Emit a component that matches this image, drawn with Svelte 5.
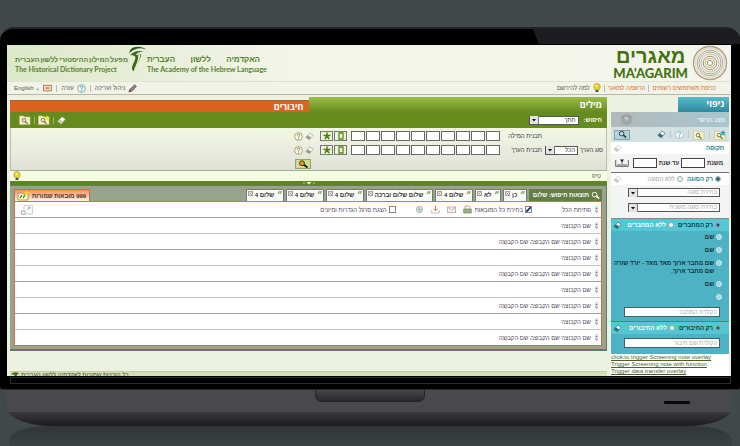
<script>
  const groups = [
    'שם הקבוצה',
    'שם הקבוצה שם הקבוצה שם הקבוצה',
    'שם הקבוצה',
    'שם הקבוצה שם הקבוצה שם הקבוצה',
    'שם הקבוצה',
    'שם הקבוצה שם הקבוצה שם הקבוצה',
    'שם הקבוצה',
    'שם הקבוצה שם הקבוצה שם הקבוצה'
  ];
  const tabs = ['כן', 'לא', 'שלום 4', 'שלום שלום וברכה', 'שלום 4', 'שלום 4', 'שלום 4'];
  const patterns = ['תבנית המילה', 'תבנית הערך'];
  const letters = Array.from({ length: 10 }, (_, i) => i + 1);
  const authors = ['שם', 'שם', 'שם מחבר ארוך מאד מאד - יורד שורה שם מחבר ארוך.', 'שם', ''];
  const links = [
    'click to trigger Screening note overlay',
    'Trigger Screening note with function',
    'Trigger data transfer overlay'
  ];
</script>

{#snippet eraser(color)}
  <svg class="ic" viewBox="0 0 10 10" aria-hidden="true">
    <path d="M1 6 5.5 1.2 9 3.6 4.8 8.6Z" fill="#fff" stroke={color} stroke-width=".8" />
    <path d="M1 6 3.2 3.7 6.8 6.2 4.8 8.6Z" fill={color} />
  </svg>
{/snippet}

{#snippet help(ring, mark, fill)}
  <svg class="ic" viewBox="0 0 10 10" aria-hidden="true">
    <circle cx="5" cy="5" r="4.3" fill={fill} stroke={ring} stroke-width=".8" />
    <path d="M3.5 4Q3.5 2.4 5 2.4T6.5 3.8Q6.5 4.6 5 5.3V6.3" fill="none" stroke={mark} stroke-width="1" />
    <circle cx="5" cy="7.6" r=".6" fill={mark} />
  </svg>
{/snippet}

{#snippet lens(color)}
  <svg class="ic" viewBox="0 0 10 10" aria-hidden="true">
    <circle cx="4" cy="4" r="2.6" fill="none" stroke={color} stroke-width="1.1" />
    <path d="M6 5.8 9 8.6" stroke={color} stroke-width="1.9" />
  </svg>
{/snippet}

{#snippet folder(star)}
  <svg class="folder" viewBox="0 0 12 10" aria-hidden="true">
    <path d="M.5 1h4l1 1h5.500v7.600H.5Z" fill="#f8f3cc" stroke="#cdc07c" stroke-width=".7" />
    <circle cx="5" cy="5.2" r="1.8" fill="none" stroke="#55603a" stroke-width=".8" />
    <path d="M6.2 6.4 8.6 8.800" stroke="#55603a" stroke-width="1.1" />
    {#if star}
      <path d="m9 0 .9 1.900 2 .2-1.500 1.400.5 2.200L9 4.700 7.100 5.700l.4-2.200L6.100 2.100l2-.2Z" fill={star} />
    {/if}
  </svg>
{/snippet}

{#snippet bulb()}
  <svg class="bulb" viewBox="0 0 8 10" aria-hidden="true">
    <circle cx="4" cy="3.800" r="3.200" fill="#f4d522" stroke="#9b8a30" stroke-width=".6" />
    <path d="M2.600 7h2.800v2H2.600Z" fill="#38506e" />
    <circle cx="3.200" cy="3" r="1" fill="#fff7a8" />
  </svg>
{/snippet}

{#snippet arrow()}
  <svg class="arrow" viewBox="0 0 8 8" aria-hidden="true"><path d="M2 3h4L4 5.600Z" fill="#111" /></svg>
{/snippet}

{#snippet chevrons()}
  <svg class="chev" viewBox="0 0 5 8" aria-hidden="true">
    <path d="M1 1h3M1 4.500h3" stroke="#888" stroke-width=".6" />
    <path d="M1 2h3L2.500 3.500ZM1 5.500h3L2.500 7Z" fill="#777" />
  </svg>
{/snippet}

<div class="desk">
  <div class="bezel">
    <div class="glare"></div>
    <div class="screen">
      <header>
        <svg class="rings" viewBox="0 0 36 36" aria-hidden="true">
          <g fill="none">
            <circle cx="18" cy="18" r="16.500" stroke="#b09c80" stroke-width="1.400" />
            <circle cx="18" cy="18" r="14.600" stroke="#e6d9c8" stroke-width="1.600" />
            <circle cx="18" cy="18" r="12.800" stroke="#7ba7a0" stroke-width=".8" />
            <circle cx="18" cy="18" r="11" stroke="#c3a08c" stroke-width="1" />
            <circle cx="18" cy="18" r="9" stroke="#a9c4b5" stroke-width="1" />
            <circle cx="18" cy="18" r="6.800" stroke="#b48c74" stroke-width="1" />
            <circle cx="18" cy="18" r="4.600" stroke="#d9b978" stroke-width="1.200" />
            <circle cx="18" cy="18" r="2.600" stroke="#7d9a8c" stroke-width=".9" />
          </g>
        </svg>
        <h1><span>מאגרים</span><span>MA'AGARIM</span></h1>
        <div class="org">
          <b><span>האקדמיה</span> <span>ללשון</span> <span>העברית</span></b>
          <span dir="ltr">The Academy of the Hebrew Language</span>
        </div>
        <svg class="bird" viewBox="0 0 20 28" aria-hidden="true">
          <path d="M1 8Q2 1 10 1q6 0 9 3-5-2-9-1Q5 4 1 8Z" fill="#2f5214" />
          <path d="M2 10Q7 4 17 6q-7 0-9 4l6-1q-1 6-5 10-2 4-3 8-3-2-1-7 2-3 3-8Q5 9 2 10Z" fill="#3c6a1b" />
          <path d="M11 9l2 1q-1 6-4 9 2-5 2-10Z" fill="#eef2e2" />
        </svg>
        <div class="org">
          <b><span>מפעל</span> <span>המילון</span> <span>ההיסטורי</span> <span>ללשון</span> <span>העברית</span></b>
          <span dir="ltr">The Historical Dictionary Project</span>
        </div>
      </header>

      <nav>
        <a class="hot" href="#login">כניסת משתמשים רשומים</a><i></i>
        <a class="hot" href="#join">הרשמה למאגר</a><i></i>
        {@render bulb()}
        <a href="#why">למה להירשם</a>
        <span class="grow"></span>
        <svg class="ic" viewBox="0 0 10 10" aria-hidden="true">
          <path d="M1 9 2 6 7.500.8 9.400 2.800 4 8Z" fill="#8a8a82" stroke="#3d3d3a" stroke-width=".7" /><path d="m1 9 1-3 2 2Z" fill="#b5442a" />
        </svg>
        <a href="#manage">ניהול ועריכה</a><i class="far"></i>
        {@render help('#6c8c94', '#1fa5c4', '#f2fbfc')}
        <a href="#help">עזרה</a><i class="far"></i>
        <svg class="ic" viewBox="0 0 10 10" aria-hidden="true">
          <path d="M.6 1.500h8.800v6H6L5 8.800 4 7.500H.6Z" fill="#f4dcc0" stroke="#8c6f54" stroke-width=".9" /><path d="M3 3.500h4v2.200H3Z" fill="#e8883c" />
        </svg>
        <a href="#english" dir="ltr">English ⌄</a>
      </nav>

      <div class="cols">
        <aside>
          <h2>ניפוי</h2>
          <div class="state"><span>מצב הניפוי</span>
            <svg viewBox="0 0 14 14" aria-hidden="true"><circle cx="7" cy="7" r="6.500" fill="#a3a8aa" /><path d="M3 4h8L8 8v3L6 10V8Z" fill="#c9cdce" stroke="#83898b" stroke-width=".7" /></svg>
          </div>
          <div class="tools">
            <button aria-label="שמירה">{@render folder('#16a7cb')}</button><i></i>
            <button aria-label="תיקייה">{@render folder('')}</button><i></i>
            <button aria-label="עזרה">{@render help('#9ab3b8', '#2aa5bd', '#fff')}</button><i></i>
            <button aria-label="ניקוי">{@render eraser('#2f6f7c')}</button>
            <span class="grow"></span>
            <button class="find" aria-label="חיפוש">{@render lens('#26404a')}</button>
          </div>
          <section class="period">
            <div class="line"><b class="teal">תקופה</b>{@render eraser('#c9c9c9')}</div>
            <div class="years">
              <label for="from">משנת</label><input id="from" />
              <label for="to">עד שנת</label><input id="to" />
              <span class="grow"></span>
              <svg viewBox="0 0 14 8" aria-hidden="true"><path d="M.7 1v6.300h12.600V1M3 7V5M5 7V5M7 7V2M9 7V5M11 7V5" fill="none" stroke="#555" stroke-width=".9" /><path d="M5 .5h4L7 3Z" fill="#111" /></svg>
            </div>
          </section>
          <section class="kind">
            <div class="line">
              <label class="teal"><input type="radio" name="kind" checked />רק הסוגה</label>
              <label class="dim"><input type="radio" name="kind" />ללא הסוגה</label>
              {@render eraser('#c9c9c9')}
            </div>
            <div class="sel wide"><select aria-label="סוגה"><option>בחירת סוגה</option></select>{@render arrow()}</div>
            <div class="sel wide"><select aria-label="סוגה משנית"><option>בחירת סוגה משנית</option></select>{@render arrow()}</div>
          </section>
          <section class="blue">
            <div class="line">
              <label><input type="radio" name="author" checked />רק המחברים</label>
              <label class="white"><input type="radio" name="author" />ללא המחברים</label>
              {@render eraser('#2b6f7b')}
            </div>
            <div class="authors">
              {#each authors as a}
                <label><input type="radio" name="pick" /><span>{a}</span></label>
              {/each}
            </div>
            <input class="field" aria-label="מחבר" placeholder="הקלדת המחבר" />
          </section>
          <section class="blue last">
            <div class="line">
              <label><input type="radio" name="work" checked />רק החיבורים</label>
              <label class="white"><input type="radio" name="work" />ללא החיבורים</label>
              {@render eraser('#2b6f7b')}
            </div>
            <input class="field" aria-label="חיבור" placeholder="הקלדת שם חיבור" />
          </section>
          <div class="links" dir="ltr">
            {#each links as l}<a href="#overlay">{l}</a>{/each}
          </div>
        </aside>

        <div class="left">
          <main>
            <div class="heads">
              <button class="words">מילים</button>
              <button class="works">חיבורים</button>
            </div>
            <div class="bar">
              <label for="mode">חיפוש:</label>
              <div class="sel mode"><select id="mode"><option>חתך</option></select>{@render arrow()}</div>
              <span class="grow"></span>
              <button aria-label="ניקוי">{@render eraser('#c5cdb5')}</button><i></i>
              <button aria-label="שמירה">{@render folder('#f8e52a')}</button><i></i>
              <button aria-label="תיקייה">{@render folder('')}</button>
            </div>
            <form>
              {#each patterns as p, r}
                <div class="frow">
                  <div class="type">
                    {#if r === 1}
                      <label for="entry">סוג הערך</label>
                      <div class="sel"><select id="entry"><option>הכל</option></select>{@render arrow()}</div>
                    {/if}
                  </div>
                  <span class="plabel">{p}</span>
                  <div class="boxes">
                    {#each letters as n}<input aria-label="{p} {n}" maxlength="1" />{/each}
                  </div>
                  <button type="button" class="key" aria-label="אות">
                    <svg viewBox="0 0 8 8" aria-hidden="true"><path d="M2 1h4v6H2Z" fill="none" stroke="#5a8a1c" stroke-width="1.300" /></svg>
                  </button>
                  <button type="button" class="key" aria-label="כוכבית">
                    <svg viewBox="0 0 8 8" aria-hidden="true"><path d="M4 .5V4M.6 3.200 4 4M7.400 3.200 4 4M1.900 7.200 4 4M6.100 7.200 4 4" stroke="#4c7a12" stroke-width="1.500" /></svg>
                  </button>
                  <button type="button" class="plain" aria-label="ניקוי">{@render eraser('#9b9f8f')}</button>
                  <button type="button" class="plain" aria-label="עזרה">{@render help('#9b7a50', '#7c8a3a', '#fbfcf0')}</button>
                </div>
              {/each}
              <button type="button" class="go" aria-label="חיפוש">
                <svg viewBox="0 0 12 8" aria-hidden="true"><path d="m6 4 4.500 3.500" stroke="#1d1d10" stroke-width="1.900" /><circle cx="5" cy="3.200" r="2.400" fill="#f0a31a" stroke="#3a3412" stroke-width="1" /></svg>
              </button>
            </form>
            <div class="tip"><span>טיפ</span>{@render bulb()}</div>
            <div class="strip"><svg viewBox="0 0 12 4" aria-hidden="true"><path d="M0 2h2M10 2h2" stroke="#b9cf92" /><path d="M3.500 1h5L6 3.600Z" fill="#fff" /></svg></div>
            <div class="results">
              <div class="tabs">
                <strong>{@render lens('#fff')}תוצאות חיפוש: שלום</strong>
                {#each tabs as t}
                  <button class="tab">
                    <em>״</em><span>{t}</span>
                    <svg viewBox="0 0 6 6" aria-hidden="true"><path d="M.5.500h5v5h-5ZM1.700 1.700l2.600 2.600M4.300 1.700 1.700 4.300" fill="none" stroke="#555" stroke-width=".7" /></svg>
                  </button>
                {/each}
                <span class="grow"></span>
                <button class="saved">999 מובאות שמורות
                  <svg viewBox="0 0 13 11" aria-hidden="true"><path d="M1 3h4l1 1h5v6H1Z" fill="#fbf7cf" stroke="#8c7b3a" stroke-width=".7" /><path d="M3 8 5 5M6 8l2-3" stroke="#4c6d1e" stroke-width="1.200" /><path d="m9.500 0 .8 1.900 2 .1-1.500 1.400.5 2-1.800-1.100L7.700 5.400l.5-2L6.700 2l2-.1Z" fill="#f4dd1f" /></svg>
                </button>
              </div>
              <div class="list">
                <div class="row first">
                  {@render chevrons()}<span class="open">פתיחת הכל</span>
                  <label><input type="checkbox" checked />בחירת כל המובאות</label>
                  <div class="acts">
                    <button aria-label="הדפסה"><svg viewBox="0 0 9 9" aria-hidden="true"><path d="M2 4V1h4l1 1v2" fill="#fff" stroke="#8b9a7c" stroke-width=".8" /><path d="M.7 4h7.600v4H.7Z" fill="#9db37e" stroke="#748560" stroke-width=".7" /></svg></button>
                    <button aria-label="דואר"><svg viewBox="0 0 9 9" aria-hidden="true"><path d="M.5 2h8v5.500h-8ZM.5 2l4 3 4-3" fill="#f5f1ee" stroke="#b3a29b" stroke-width=".8" /></svg></button>
                    <button aria-label="הורדה"><svg viewBox="0 0 9 9" aria-hidden="true"><path d="M.7 5v3h7.600V5" fill="none" stroke="#aaa" stroke-width=".8" /><path d="M4.500.500v5M2.500 3.600l2 2.200 2-2.200" fill="none" stroke="#cf7a60" stroke-width="1" /></svg></button>
                    <button aria-label="הגדרות"><svg viewBox="0 0 9 9" aria-hidden="true"><circle cx="4.500" cy="4.500" r="3" fill="#dfe6e8" stroke="#9aa8ad" stroke-width="1" /><circle cx="4.500" cy="4.500" r="1" fill="#84959b" /></svg></button>
                  </div>
                  <label><input type="checkbox" />הצגת סרגל הגדרות ומיונים</label>
                  <span class="grow"></span>
                  <button class="expand" aria-label="הרחבה"><svg viewBox="0 0 12 10" aria-hidden="true"><path d="M3 5V.6h8.400V9H5" fill="none" stroke="#bbb" stroke-width=".8" /><path d="M.6 6h3.600v3.400H.6ZM6 5l3-2.600M7 2.400h2v2" fill="none" stroke="#999" stroke-width=".8" /></svg></button>
                </div>
                {#each groups as g}
                  <div class="row">{@render chevrons()}<span>{g}</span></div>
                {/each}
              </div>
            </div>
          </main>
          <footer>
            <span>כל הזכויות שמורות לאקדמיה ללשון העברית</span>
            <svg viewBox="0 0 8 8" aria-hidden="true"><path d="M0 2Q3-1 8 1 6 2 5 5L3 8Q2 5 4 3Z" fill="#3c6a1b" /></svg>
          </footer>
        </div>
      </div>
    </div>
    <div class="hinge"></div>
  </div>
  <div class="base"><div class="notch"></div><div class="slot"></div></div>
  <div class="mirror"></div>
</div>

<style>
  :global(body) { background: #404849; }
  .desk, .desk :global(*) { box-sizing: border-box; }
  .desk {
    min-height: 100vh; display: flex; flex-direction: column; padding-top: 27px;
    background: #404849; font: 6px/8px "Liberation Sans", Arial, sans-serif; color: #333;
    overflow: hidden;
  }
  .bezel {
    position: relative; background: #000; border-top: 2px solid #222326; border-radius: 14px 14px 3px 3px;
    padding: 16px 9px 5px 7px; border-bottom: 1px solid #2a2b2d;
  }
  .glare {
    position: absolute; top: 0; right: 0; width: 28%; height: 15px; background: #1d1d20;
    clip-path: polygon(0 0, 100% 0, 100% 100%, 3% 100%); border-top-right-radius: 12px;
  }
  .screen { direction: rtl; background: #edf1e2; overflow: hidden; position: relative; }
  .hinge { height: 7px; margin: 1px 0 0 3px; border: 1px solid #2c2d2f; }

  button { border: 0; background: none; padding: 0; margin: 0; font: inherit; color: inherit; display: flex; align-items: center; cursor: pointer; }
  input, select { font: inherit; color: inherit; margin: 0; padding: 0; border-radius: 0; appearance: none; min-width: 0; }
  svg { display: block; flex: none; }
  a { color: inherit; text-decoration: none; white-space: nowrap; }
  label { display: flex; align-items: center; gap: 2px; white-space: nowrap; }
  .grow { flex: 1; }
  .ic { width: 9px; height: 9px; }
  .folder { width: 12px; height: 10px; }
  .bulb { width: 8px; height: 10px; }
  .arrow { width: 9px; height: 8px; background: #e3e3e0; border-right: 1px solid #777; }
  .chev { width: 5px; height: 8px; }

  header {
    height: 36px; display: flex; align-items: center; padding: 0 3px 0 8px;
    background: linear-gradient(90deg, #dde8c9, #f3f5ea 40%, #f3f5ec);
  }
  .rings { width: 36px; height: 36px; }
  h1 { margin: 0 4px 0 auto; color: #41720f; display: flex; flex-direction: column; align-items: center; }
  h1 span:first-child { font: 700 20px/20px "Liberation Sans", Arial, sans-serif; }
  h1 span:last-child { font: 900 13px/15px Lato, sans-serif; direction: ltr; }
  .org { width: 113px; display: flex; flex-direction: column; color: #55822b; padding-top: 1px; }
  .org b { display: flex; justify-content: space-between; font-size: 8px; line-height: 10px; font-weight: 700; }
  .org:last-child b { font-size: 7px; }
  .org > span { font: 700 7px/8px Lato, sans-serif; white-space: nowrap; }
  .bird { width: 19px; height: 28px; align-self: flex-start; }

  nav {
    display: flex; align-items: center; gap: 3px; height: 14px; padding: 0 15px 0 7px;
    border-top: 1px solid #dfe3d2; border-bottom: 1px solid #b5b7ac; background: #f0f3e5; color: #555;
  }
  nav .hot { color: #e0692f; }
  i { width: 1px; height: 7px; background: #bcbcb0; flex: none; }
  .far { margin: 0 1px; }

  .cols { display: flex; gap: 4px; padding: 2px 2px 0 3px; align-items: stretch; }
  aside { width: 118px; flex: none; display: flex; flex-direction: column; height: 279px; overflow: hidden; }
  h2 {
    margin: 0; width: 51px; height: 15px; font: 700 9px/14px "Open Sans", "Liberation Sans", sans-serif; color: #fff;
    padding-right: 5px; background: linear-gradient(#58bccb, #2f88a0);
  }
  .state { display: flex; align-items: center; justify-content: space-between; flex: none; height: 15px; padding: 0 4px 0 9px; color: #fff; background: linear-gradient(90deg, #b4b9bb, #a6c6ce); }
  .state svg { width: 13px; height: 13px; }
  .tools { display: flex; align-items: center; gap: 4px; flex: none; height: 15px; padding: 0 3px; background: #d3e1e3; }
  .tools .find { width: 16px; height: 10px; justify-content: center; background: #b5d5da; border: 1px solid #7fa2aa; }
  .tools i { background: #b9c8ca; }
  section { flex: none; }
  .line { display: flex; align-items: center; gap: 4px; height: 12px; padding: 0 8px 0 2px; font-weight: 700; }
  .line > :global(svg) { margin-right: auto; }
  .teal { color: #21808f; }
  .dim { color: #999; font-weight: 400; }
  .white { color: #fff; }
  .period { height: 31px; background: #fff; border-bottom: 1px solid #6a7778; }
  .period .line { padding-right: 5px; }
  .years { display: flex; align-items: center; gap: 2px; height: 18px; padding: 0 6px 0 4px; background: #f3f3f3; font-weight: 700; }
  .years input { width: 24px; height: 10px; border: 1px solid #444; background: #fff; }
  .years svg { width: 14px; height: 8px; }
  .kind { height: 45px; background: #f3f4f4; }
  .kind .line { background: #fff; margin-bottom: 3px; }
  .sel { display: flex; align-items: center; height: 9px; border: 1px solid #555; background: #fff; }
  .sel select { flex: 1; border: 0; background: #fff; height: 7px; line-height: 7px; padding-right: 2px; outline: 0; }
  .wide { margin: 0 9px 6px 17px; color: #aaa; }
  .blue { background: #4cb2c4; color: #10343c; height: 103px; border-top: 1px solid #8c8580; font-weight: 700; }
  .blue .line { background: #54c6d6; }
  .authors { display: flex; flex-direction: column; gap: 5px; height: 76px; padding: 2px 7px 0 0; }
  .authors label { align-items: flex-start; white-space: normal; line-height: 8px; }
  .blue .field { display: block; width: 96px; height: 10px; margin-right: 9px; padding-right: 2px; border: 1px solid #3d626a; background: #fff; font-weight: 400; }
  .last { height: 33px; border-top-color: #8a6a68; }
  .last .line { margin-bottom: 4px; }
  .field::placeholder { color: #aaa; opacity: 1; }
  input[type='radio'] { width: 6px; height: 6px; border-radius: 50%; border: 1px solid #9aa; background: #eef2f2; flex: none; }
  input[type='radio']:checked { background: radial-gradient(#1c5a78 1px, #bfdbe4 3px); }
  .authors input { background: #a3d5dc; border-color: #d2eaee; margin-top: 1px; }
  .links { flex: 1; background: #fff; color: #4a5f26; display: flex; flex-direction: column; overflow: hidden; }
  .links a { text-decoration: underline; line-height: 7px; flex: none; }

  .left { flex: 1; min-width: 0; display: flex; flex-direction: column; }
  .heads { display: flex; align-items: flex-end; height: 15px; color: #fff; font: 700 9px/11px "Open Sans", "Liberation Sans", sans-serif; }
  .heads button { flex: 1; padding-right: 5px; }
  .words { height: 15px; background: linear-gradient(#9cbd48, #678b20); }
  .works { height: 12px; background: #dc6220; border-top: 1px solid #a9672f; }
  .bar { display: flex; align-items: center; gap: 3px; height: 16px; padding: 0 5px 0 9px; background: #658a1e; color: #fff; font-weight: 700; }
  .bar i { background: #9eb56b; }
  .mode { width: 50px; margin-right: 2px; color: #333; font-weight: 400; }
  form { height: 42px; padding: 3px 3px 0; background: linear-gradient(#f3f8e4, #dfe1d8); border-left: 1px solid #b9bfa8; border-right: 1px solid #b9bfa8; }
  .frow { display: flex; align-items: center; height: 14px; padding-bottom: 4px; }
  .type { width: 61px; display: flex; align-items: center; gap: 3px; }
  .type .sel { width: 33px; }
  .type label { width: 22px; }
  .plabel { width: 38px; white-space: nowrap; }
  .boxes { display: flex; gap: 1px; margin-left: 4px; margin-right: 4px; }
  .boxes input { width: 14px; height: 10px; border: 1px solid #666; background: #fff; }
  .key { width: 13px; height: 10px; margin-left: 1px; border: 1px solid #777; background: #edf3d8; justify-content: center; }
  .key svg { width: 8px; height: 8px; }
  .plain { margin-right: 2px; }
  .key + .plain { margin-right: 5px; }
  .go { width: 16px; height: 10px; margin-right: 292px; border: 1px solid #98a070; background: #cfdb96; justify-content: center; }
  .go svg { width: 12px; height: 8px; }
  .tip { display: flex; align-items: center; justify-content: space-between; height: 11px; padding: 0 6px 0 3px; background: #f4fce2; border-top: 1px solid #a5ad92; color: #555; }
  .strip { height: 4px; background: #5f861a; display: flex; justify-content: center; }
  .strip svg { width: 12px; height: 4px; }
  .results { padding: 3px 4px 3px; background: #98a38b; border: solid #6d7668; border-width: 1px 1px 2px 0; }
  .tabs { display: flex; align-items: flex-end; gap: 2px; height: 12px; white-space: nowrap; font-weight: 700; }
  .tabs strong { display: flex; align-items: center; gap: 2px; height: 12px; padding: 0 2px 0 4px; background: #667d48; color: #fff; }
  .tab { height: 12px; padding: 0 1px; gap: 2px; background: #fbfbf7; color: #333; align-items: flex-start; border: solid #737b69; border-width: 1px 1px 0; }
  .tab span { line-height: 11px; }
  .tab em { font-size: 9px; line-height: 12px; color: #5c9314; }
  .tab svg { width: 5px; height: 5px; margin-top: 1px; }
  .saved { height: 12px; padding: 0 3px 0 2px; gap: 2px; color: #4a321e; background: linear-gradient(#f38f58, #fff3ec); border: 1px solid #d46b36; border-bottom: 0; }
  .saved svg { width: 13px; height: 11px; }
  .list { background: #fff; border: 1px solid #cf7046; }
  .row { display: flex; align-items: center; gap: 3px; height: 16px; padding: 0 2px 0 6px; border-bottom: 1px solid #c3c6c9; color: #4b3f55; }
  .row:nth-child(odd) { border-bottom-color: #9b9da2; }
  .row:last-child { border-bottom: 0; height: 15px; }
  .open { margin-left: 27px; }
  .row input { width: 7px; height: 7px; border: 1px solid #888; background: #fff; }
  .row input:checked { background: linear-gradient(135deg, #fff 35%, #36518c 36% 64%, #fff 65%); }
  .acts { display: flex; gap: 7px; margin: 0 0 0 16px; }
  .acts svg { width: 9px; height: 9px; }
  .expand svg { width: 12px; height: 10px; }
  footer { margin-top: auto; height: 5px; overflow: hidden; display: flex; justify-content: flex-end; gap: 2px; background: #d5e1b5; color: #3b4a1e; border-top: 1px solid #c3cca9; padding-left: 1px; line-height: 7px; }
  footer svg { width: 8px; height: 8px; }

  .base {
    position: relative; height: 36px; margin: 0 8px 0 7px; border-radius: 2px 2px 46px 46px / 2px 2px 18px 18px;
    background: linear-gradient(#4a4a4c, #49494b 60%, #3a3a3c 62%, #1b1b1d); display: flex; justify-content: center;
  }
  .notch { width: 110px; height: 12px; border-radius: 0 0 7px 7px; background: linear-gradient(#464648, #29292b); border: solid #242426; border-width: 0 1px 1px; }
  .slot { position: absolute; right: 42px; top: 11px; width: 26px; height: 3px; background: #08080a; border-radius: 1px; }
  .mirror { flex: 1; min-height: 21px; margin: 0 8px 0 9px; border-radius: 40px 40px 0 0 / 14px 14px 0 0; background: linear-gradient(#303536, #3d4445); }
</style>
